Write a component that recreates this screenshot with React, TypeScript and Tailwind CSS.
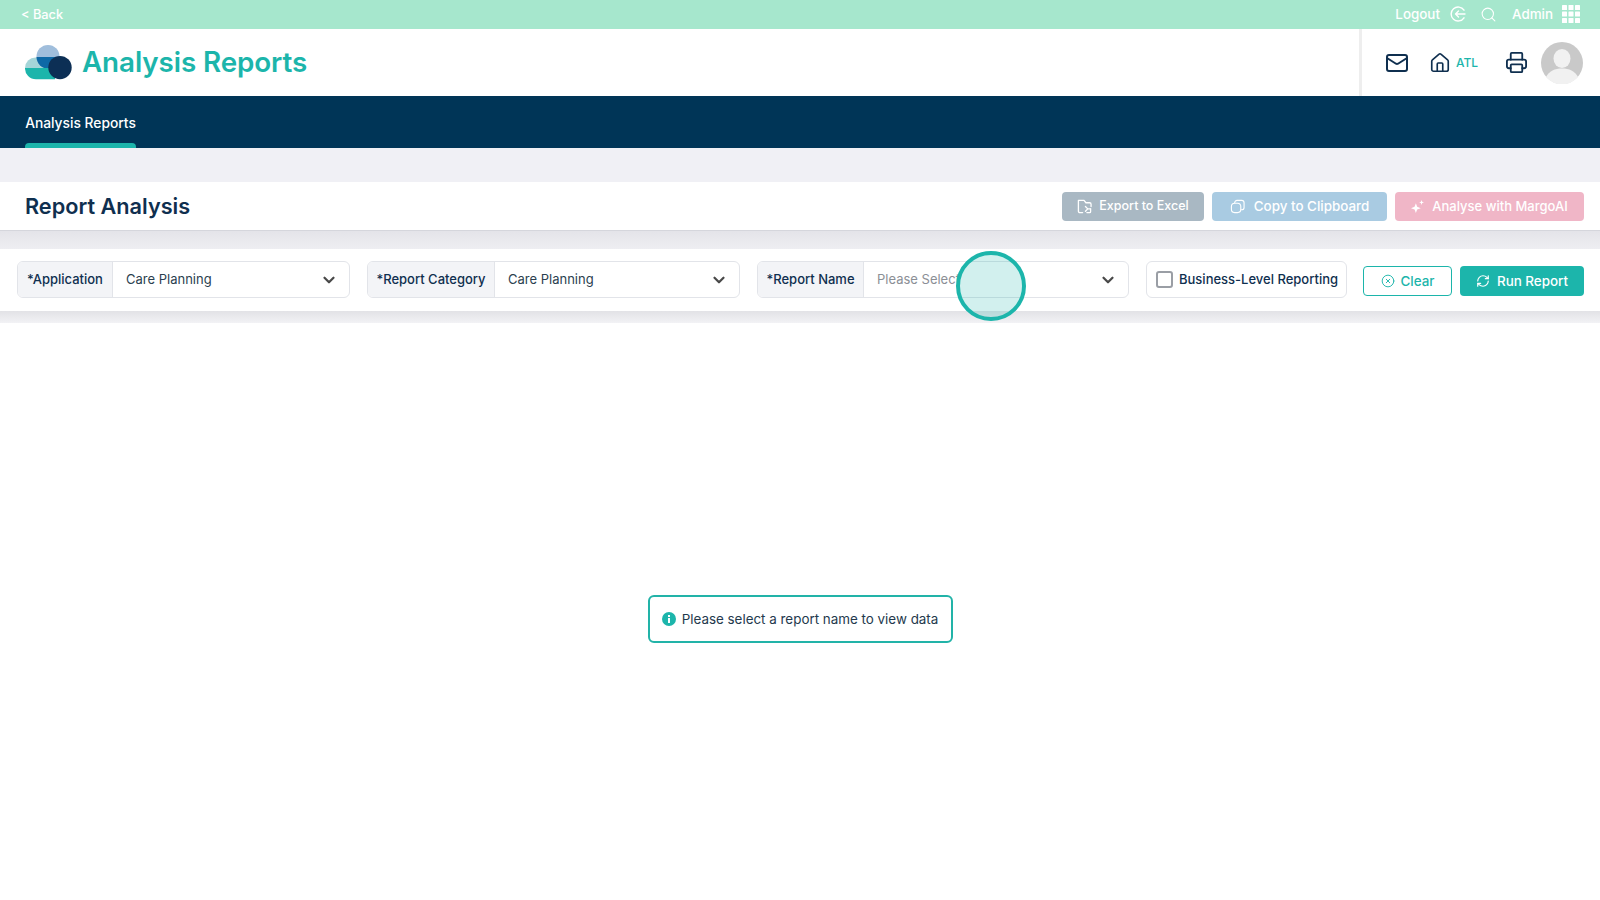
import { ChevronDown, CircleX, House, Mail, Printer, RefreshCw, Search } from 'lucide-react'

const GridIcon = () => (
  <svg width="18" height="18" viewBox="0 0 18 18" fill="#ffffff">
    {[0, 6.5, 13].map((y) =>
      [0, 6.5, 13].map((x) => <rect key={`${x}-${y}`} x={x} y={y} width="5" height="5" rx="0.6" />)
    )}
  </svg>
)

const LogoutIcon = () => (
  <svg width="16" height="16" viewBox="0 0 16 16" fill="none" stroke="#ffffff" strokeWidth="1.4" strokeLinecap="round" strokeLinejoin="round">
    <path d="M14 4.200A7 7 0 1 0 14 11.800" />
    <path d="M15 8H5.500M8.500 5L5.500 8l3 3" />
  </svg>
)

const Logo = () => (
  <svg width="47" height="35" viewBox="0 0 47 35">
    <path d="M0 23a10.500 10.500 0 0 1 10.500-10.500H30V23z" fill="#a5d5d8" />
    <circle cx="23" cy="11.500" r="11.500" fill="#a0bedc" />
    <path d="M11.500 12a11.500 11.500 0 0 0 23 0z" fill="#0e68a6" />
    <path d="M0 23h30v11.300H11A11 11 0 0 1 0 23z" fill="#1cb5ab" />
    <circle cx="35" cy="22.600" r="11.700" fill="#0c2f55" />
  </svg>
)

const ExportIcon = () => (
  <svg width="15" height="15" viewBox="0 0 16 16" fill="none" stroke="#ffffff" strokeWidth="1.4" strokeLinecap="round" strokeLinejoin="round">
    <path d="M6 14.500H3a1.500 1.500 0 0 1-1.500-1.500V1.500h6l2 2.500h4a1.500 1.500 0 0 1 1.500 1.500V8" />
    <path d="M9 8l2.500 2.500L9 13M14.500 10.500h-3" />
    <path d="M14.500 10.500v3a1 1 0 0 1-1 1h-3" />
  </svg>
)

const CopyIcon = () => (
  <svg width="15" height="15" viewBox="0 0 16 16" fill="none" stroke="#ffffff" strokeWidth="1.2">
    <rect x="1.500" y="4.500" width="10" height="10" rx="3.500" />
    <path d="M5 4.500V4a2.500 2.500 0 0 1 2.500-2.500h5A2.500 2.500 0 0 1 15 4v5a2.500 2.500 0 0 1-2.500 2.500H11.500" />
  </svg>
)

const SparkIcon = () => (
  <svg width="13" height="13" viewBox="0 0 16 16" fill="#ffffff">
    <path d="M6 4l1.600 4.400L12 10l-4.400 1.600L6 16l-1.600-4.400L0 10l4.400-1.600z" />
    <path d="M13 0l.8 2.200L16 3l-2.200.8L13 6l-.8-2.200L10 3l2.200-.8z" />
  </svg>
)

const InfoIcon = () => (
  <svg width="14" height="14" viewBox="0 0 14 14">
    <circle cx="7" cy="7" r="7" fill="#1cb5ab" />
    <rect x="6" y="6" width="2" height="5" fill="#ffffff" />
    <rect x="6" y="3" width="2" height="2" fill="#ffffff" />
  </svg>
)

const Avatar = () => (
  <svg width="42" height="42" viewBox="0 0 42 42">
    <circle cx="21" cy="21" r="21" fill="#c9c9c9" />
    <ellipse cx="21" cy="16.500" rx="8.500" ry="9.500" fill="#f1f1f1" />
    <path d="M5 35c3-6 9-8.500 16-8.500s13 2.500 16 8.500a21 21 0 0 1-32 0z" fill="#f1f1f1" />
  </svg>
)

interface FilterProps {
  label: string
  value: string
  labelWidth: string
  width: string
  placeholder?: boolean
}

const Filter = ({ label, value, labelWidth, width, placeholder }: FilterProps) => (
  <div className={`flex h-[37px] shrink-0 items-stretch overflow-hidden rounded-md border border-[#e2e4e9] bg-white ${width}`}>
    <div className={`flex shrink-0 items-center justify-center border-r border-[#e2e4e9] bg-[#f3f4f7] pt-[1px] text-[13px] font-medium text-[#0f2f4f] ${labelWidth}`}>
      {label}
    </div>
    <div className="flex flex-1 items-center justify-between pl-[13px] pr-[11px]">
      <span className={`pt-[1px] text-[13px] ${placeholder ? 'text-[#8b8f96]' : 'text-[#2b3f50]'}`}>{value}</span>
      <ChevronDown size={18} strokeWidth={3} className="text-[#4a4a4a]" />
    </div>
  </div>
)

export default function App() {
  return (
    <div className="relative flex min-h-[900px] flex-col bg-white font-['Inter',sans-serif]">
      {/* Top strip */}
      <div className="flex h-[29px] items-center justify-between bg-[#a6e7cd] pl-[21px] pr-[20px] text-[13.400px] font-medium text-white">
        <span className="text-[12.800px]">&lt; Back</span>
        <div className="flex items-center">
          <span>Logout</span>
          <span className="ml-[10px]"><LogoutIcon /></span>
          <Search size={17} strokeWidth={1.5} className="ml-[14px]" />
          <span className="ml-[15px]">Admin</span>
          <span className="ml-[9px]"><GridIcon /></span>
        </div>
      </div>

      {/* Header */}
      <div className="flex h-[67px] items-center justify-between pl-[25px] pr-[17px]">
        <div className="flex items-center gap-[10px]">
          <Logo />
          <span className="pt-[1px] text-[27.800px] font-semibold tracking-[-0.1px] text-[#1cb5ab]">Analysis Reports</span>
        </div>
        <div className="flex h-full items-center border-l-[3px] border-[#eeeeee] pl-[23px]">
          <Mail size={24} strokeWidth={2} className="text-[#0f2f4f]" />
          <House size={22} strokeWidth={1.8} className="ml-[20px] text-[#0f2f4f]" />
          <span className="ml-[5px] text-[12px] font-medium text-[#1cb5ab]">ATL</span>
          <Printer size={23} strokeWidth={1.9} className="ml-[27px] text-[#0f2f4f]" />
          <span className="ml-[13px]"><Avatar /></span>
        </div>
      </div>

      {/* Nav */}
      <div className="flex h-[52px] bg-[#003557] pl-[25px]">
        <div className="flex w-[111px] flex-col items-center justify-between">
          <span className="mt-[17px] text-[13.800px] font-medium text-white">Analysis Reports</span>
          <div className="h-[5px] w-full rounded-t-sm bg-[#1cb5ab]" />
        </div>
      </div>

      <div className="h-[34px] bg-[#f0f0f5]" />

      {/* Title row */}
      <div className="flex h-[49px] items-center justify-between border-b border-[#d5d6dc] pl-[25px] pr-[16px]">
        <h1 className="text-[21.700px] font-semibold text-[#0f2f4f]">Report Analysis</h1>
        <div className="flex gap-[8px] font-medium text-white">
          <button className="flex h-[29px] w-[142px] items-center justify-center gap-[7px] rounded bg-[#a9b8c3] text-[12.500px]"><ExportIcon /><span className="pt-[1px]">Export to Excel</span></button>
          <button className="flex h-[29px] w-[175px] items-center justify-center gap-[9px] rounded bg-[#a9cbe2] text-[13.400px]"><CopyIcon /><span className="pt-[1px]">Copy to Clipboard</span></button>
          <button className="flex h-[29px] w-[189px] items-center justify-center gap-[8px] rounded bg-[#f0b6c7] text-[13px]"><SparkIcon /><span className="pt-[1px]">Analyse with MargoAI</span></button>
        </div>
      </div>

      <div className="h-[18px] bg-linear-to-b from-[#e4e4e9] to-[#eeeef2]" />

      {/* Filters */}
      <div className="flex h-[62px] items-center gap-[17px] pb-[1px] pl-[17px] pr-[16px]">
        <Filter label="*Application" value="Care Planning" labelWidth="w-[95px]" width="w-[333px]" />
        <Filter label="*Report Category" value="Care Planning" labelWidth="w-[127px]" width="w-[373px]" />
        <Filter label="*Report Name" value="Please Select" labelWidth="w-[106px]" width="w-[372px]" placeholder />
        <label className="flex h-[37px] w-[201px] shrink-0 items-center gap-[6px] rounded-md border border-[#e2e4e9] pl-[9px]">
          <span className="h-[17px] w-[17px] rounded-[3px] border-2 border-[#9a9ea5]" />
          <span className="pt-[1px] text-[13px] font-medium text-[#0f2f4f]">Business-Level Reporting</span>
        </label>
        <div className="ml-[-1px] mt-[3px] flex shrink-0 gap-[8px] text-[13.400px] font-medium">
          <button className="flex h-[30px] w-[89px] items-center justify-center gap-[6px] rounded border border-[#1cb5ab] text-[#1cb5ab]"><CircleX size={14} strokeWidth={1.6} />Clear</button>
          <button className="flex h-[30px] w-[124px] items-center justify-center gap-[7px] rounded bg-[#1cb5ab] text-white"><RefreshCw size={14} strokeWidth={2} />Run Report</button>
        </div>
      </div>

      <div className="h-[12px] bg-linear-to-b from-[#e2e2e6] to-[#f2f2f5]" />

      {/* Empty state */}
      <div className="flex flex-1 justify-center pt-[272px]">
        <div className="flex h-[48px] w-[305px] items-center justify-center gap-[6px] rounded-md border-2 border-[#22b3a8] text-[13.400px] text-[#24394d]">
          <InfoIcon />
          Please select a report name to view data
        </div>
      </div>

      {/* Click marker */}
      <div className="absolute left-[956px] top-[251px] h-[70px] w-[70px] rounded-full border-4 border-[#1cb5ab] bg-[#1cb5ab]/20" />
    </div>
  )
}
